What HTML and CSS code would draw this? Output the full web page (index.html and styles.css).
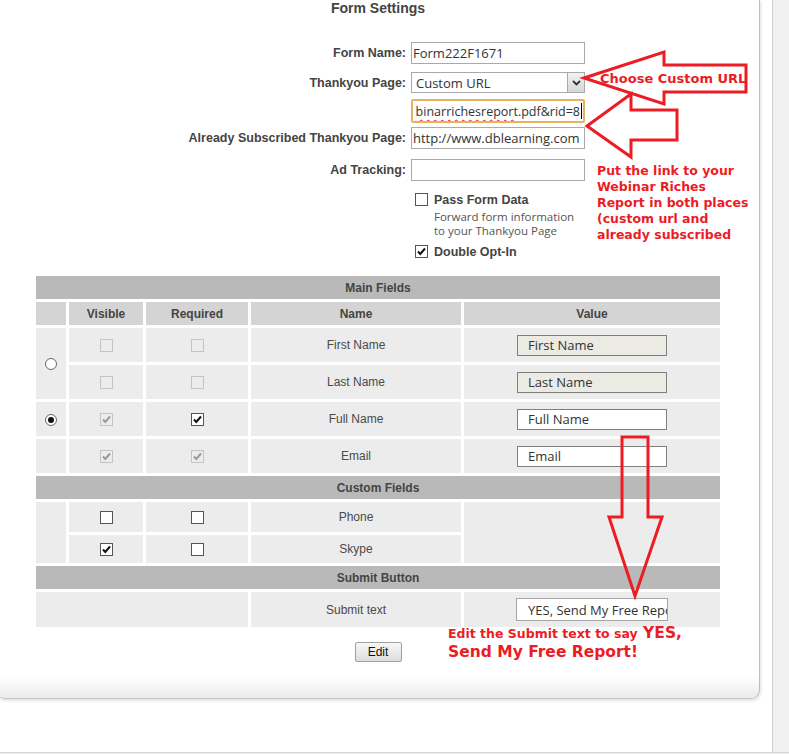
FILE: index.html
```html
<!DOCTYPE html>
<html>
<head>
    <title>Form Settings</title>
    <link rel="stylesheet" href="styles.css">
</head>
<body>
    <div class="window">
        <div class="main">
            <div class="panel">
                <h1 class="title">Form Settings</h1>

                <div class="settings">
                    <label>Form Name:</label>
                    <input class="field" type="text" value="Form222F1671">

                    <label>Thankyou Page:</label>
                    <div class="select">
                        <span class="select-text">Custom URL</span>
                        <span class="select-btn">
                            <svg width="9" height="6" viewBox="0 0 9 6"><polyline points="1,1 4.5,4.5 8,1" fill="none" stroke="#333" stroke-width="1.8"/></svg>
                        </span>
                    </div>

                    <span></span>
                    <div class="field focused">
                        <span><span class="misspelled">binarrichesreport</span>.pdf&amp;rid=8</span><span class="caret"></span>
                    </div>

                    <label>Already Subscribed Thankyou Page:</label>
                    <input class="field" type="text" value="http://www.dblearning.com">

                    <label>Ad Tracking:</label>
                    <input class="field" type="text" value="">
                </div>

                <div class="options">
                    <div class="option">
                        <span class="box"></span>
                        <div>
                            <div class="option-title">Pass Form Data</div>
                            <div class="option-desc">Forward form information<br>to your Thankyou Page</div>
                        </div>
                    </div>
                    <div class="option opt-in">
                        <span class="box"><svg width="11" height="11" viewBox="0 0 11 11"><polyline points="2,5.5 4.3,8 9,2.5" fill="none" stroke="#111" stroke-width="2"/></svg></span>
                        <div class="option-title">Double Opt-In</div>
                    </div>
                </div>

                <table class="fields">
                    <colgroup>
                        <col class="c-pick"><col class="c-vis"><col class="c-req"><col class="c-name"><col class="c-val">
                    </colgroup>
                    <tr class="section"><th colspan="5">Main Fields</th></tr>
                    <tr class="heads"><th></th><th>Visible</th><th>Required</th><th>Name</th><th>Value</th></tr>
                    <tr class="row">
                        <td rowspan="2"><span class="radio"></span></td>
                        <td><span class="box dim"></span></td>
                        <td><span class="box dim"></span></td>
                        <td>First Name</td>
                        <td><input class="value" type="text" value="First Name" disabled></td>
                    </tr>
                    <tr class="row">
                        <td><span class="box dim"></span></td>
                        <td><span class="box dim"></span></td>
                        <td>Last Name</td>
                        <td><input class="value" type="text" value="Last Name" disabled></td>
                    </tr>
                    <tr class="row">
                        <td><span class="radio on"></span></td>
                        <td><span class="box dim"><svg width="11" height="11" viewBox="0 0 11 11"><polyline points="2,5.5 4.3,8 9,2.5" fill="none" stroke="#9a9a9a" stroke-width="2"/></svg></span></td>
                        <td><span class="box"><svg width="11" height="11" viewBox="0 0 11 11"><polyline points="2,5.5 4.3,8 9,2.5" fill="none" stroke="#111" stroke-width="2"/></svg></span></td>
                        <td>Full Name</td>
                        <td><input class="value" type="text" value="Full Name"></td>
                    </tr>
                    <tr class="row">
                        <td></td>
                        <td><span class="box dim"><svg width="11" height="11" viewBox="0 0 11 11"><polyline points="2,5.5 4.3,8 9,2.5" fill="none" stroke="#9a9a9a" stroke-width="2"/></svg></span></td>
                        <td><span class="box dim"><svg width="11" height="11" viewBox="0 0 11 11"><polyline points="2,5.5 4.3,8 9,2.5" fill="none" stroke="#9a9a9a" stroke-width="2"/></svg></span></td>
                        <td>Email</td>
                        <td><input class="value" type="text" value="Email"></td>
                    </tr>
                    <tr class="section"><th colspan="5">Custom Fields</th></tr>
                    <tr class="phone">
                        <td rowspan="2"></td>
                        <td><span class="box"></span></td>
                        <td><span class="box"></span></td>
                        <td>Phone</td>
                        <td rowspan="2"></td>
                    </tr>
                    <tr class="skype">
                        <td><span class="box"><svg width="11" height="11" viewBox="0 0 11 11"><polyline points="2,5.5 4.3,8 9,2.5" fill="none" stroke="#111" stroke-width="2"/></svg></span></td>
                        <td><span class="box"></span></td>
                        <td>Skype</td>
                    </tr>
                    <tr class="section"><th colspan="5">Submit Button</th></tr>
                    <tr class="submit">
                        <td colspan="3"></td>
                        <td>Submit text</td>
                        <td><input class="value light" type="text" value="YES, Send My Free Report!"></td>
                    </tr>
                </table>

                <div class="actions">
                    <button class="edit-btn">Edit</button>
                </div>
            </div>
        </div>
        <div class="track"></div>
    </div>

    <!-- red annotations drawn on top of the screenshot -->
    <svg class="arrows" width="789" height="754" viewBox="0 0 789 754">
        <path d="M584 78 L664 52 L664 65 L746 65 L746 92 L664 92 L664 104 Z"/>
        <path d="M587 126 L631 94 L631 110 L677 110 L677 140 L631 140 L631 157 Z"/>
        <path d="M622 437 L648 437 L648 517 L662 517 L635 596 L609 517 L622 517 Z"/>
    </svg>
    <div class="note note-choose">Choose Custom URL</div>
    <div class="note note-link">Put the link to your<br>Webinar Riches<br>Report in both places<br>(custom url and<br>already subscribed</div>
    <div class="note note-submit"><span class="small">Edit the Submit text to say</span> YES,<br>Send My Free Report!</div>
</body>
</html>
```

FILE: styles.css
```css
body {
    margin: 0;
    background: #f0f0f0;
    font-family: "Liberation Sans", Arial, sans-serif;
    color: #444;
}

.window {
    display: flex;
    height: 752px;
    background: #fff;
    border-bottom: 1px solid #d6d6d6;
}

.main {
    width: 772px;
}

.track {
    flex: 1;
    border-left: 1px solid #d0d0d0;
    background: #f0f0f0;
}

.panel {
    box-sizing: border-box;
    width: 764px;
    height: 699px;
    margin-left: -4px;
    padding: 0 3px 0 4px;
    border-right: 1px solid #bdbdbd;
    border-bottom: 1px solid #c6c6c6;
    border-radius: 0 0 9px 9px;
    background: linear-gradient(to bottom, #fff calc(100% - 22px), #ebebeb);
    box-shadow: 1px 2px 3px rgba(0, 0, 0, 0.12);
}

.title {
    margin: 0;
    font-size: 14px;
    line-height: 16px;
    text-align: center;
    color: #444;
}

/* top settings block */
.settings {
    display: grid;
    grid-template-columns: 406px 174px;
    grid-template-rows: 30px 27px 28px 32px 22px;
    column-gap: 5px;
    margin-top: 26px;
}

.settings label {
    text-align: right;
    font-weight: bold;
    font-size: 12.5px;
    line-height: 22px;
}

.field {
    box-sizing: border-box;
    width: 174px;
    height: 22px;
    margin: 0;
    padding: 0 1px;
    border: 1px solid #a9a9a9;
    background: #fff;
    font-family: "Open Sans", sans-serif;
    font-size: 13px;
    color: #333;
    outline: none;
}

.field.focused {
    display: flex;
    align-items: center;
    justify-content: flex-end;
    height: 24px;
    padding: 0 1px 0 0;
    border: 2px solid #e9b062;
    border-radius: 2px;
    overflow: hidden;
    white-space: nowrap;
    font-size: 12.5px;
}

.misspelled {
    text-decoration: underline wavy #e02020;
    text-decoration-thickness: 1px;
    text-underline-offset: 3px;
}

.caret {
    flex: none;
    width: 1px;
    height: 16px;
    margin-left: 1px;
    background: #000;
}

.select {
    box-sizing: border-box;
    display: flex;
    align-items: center;
    width: 174px;
    height: 21px;
    border: 1px solid #a9a9a9;
    background: #fff;
}

.select-text {
    flex: 1;
    padding-left: 4px;
    font-family: "Open Sans", sans-serif;
    font-size: 13px;
    color: #333;
}

.select-btn {
    box-sizing: border-box;
    display: flex;
    align-items: center;
    justify-content: center;
    width: 17px;
    height: 19px;
    border-left: 1px solid #a9a9a9;
    background: linear-gradient(#f2f2f2, #d6d6d6);
}

.options {
    margin: 12px 0 0 415px;
}

.option {
    display: flex;
    gap: 6px;
    align-items: flex-start;
}

.opt-in {
    margin-top: 7px;
}

.option-title {
    font-weight: bold;
    font-size: 12.5px;
    line-height: 14px;
}

.option-desc {
    margin-top: 3px;
    font-family: "Open Sans", sans-serif;
    font-size: 11.5px;
    line-height: 14px;
    color: #555;
}

/* checkboxes and radios */
.box {
    box-sizing: border-box;
    display: inline-flex;
    align-items: center;
    justify-content: center;
    flex: none;
    width: 13px;
    height: 13px;
    border: 1px solid #555;
    background: #fff;
    vertical-align: middle;
}

.box.dim {
    border-color: #c4c4c4;
    background: #ececec;
}

.radio {
    box-sizing: border-box;
    display: inline-flex;
    align-items: center;
    justify-content: center;
    width: 12px;
    height: 12px;
    border: 1px solid #666;
    border-radius: 50%;
    background: #fff;
    vertical-align: middle;
}

.radio.on::after {
    content: "";
    width: 6px;
    height: 6px;
    border-radius: 50%;
    background: #111;
}

/* fields table */
.fields {
    width: 690px;
    margin: 14px 0 0 33px;
    table-layout: fixed;
    border-collapse: separate;
    border-spacing: 3px;
}

.c-pick { width: 30px; }
.c-vis { width: 74px; }
.c-req { width: 102px; }
.c-name { width: 210px; }
.c-val { width: 256px; }

.fields th,
.fields td {
    padding: 0;
    text-align: center;
    font-size: 12px;
}

.fields th {
    font-weight: bold;
    color: #444;
}

.fields td {
    background: #ececec;
    color: #4a4a4a;
}

.section th {
    height: 23px;
    background: #b9b9b9;
}

.heads th {
    height: 23px;
    background: #d4d4d4;
}

.row td { height: 34px; }
.phone td { height: 30px; }
.skype td { height: 28px; }
.submit td { height: 35px; }

.value {
    box-sizing: border-box;
    width: 150px;
    height: 21px;
    margin: 0;
    padding: 0 0 0 10px;
    border: 1px solid #7f7f7f;
    background: #fff;
    font-family: "Open Sans", sans-serif;
    font-size: 13px;
    color: #333;
    vertical-align: middle;
}

.value:disabled {
    background: #ebeae3;
    color: #333;
}

.value.light {
    width: 152px;
    height: 23px;
    padding-left: 11px;
    border-color: #a5a5a5;
}

.actions {
    margin-top: 12px;
    text-align: center;
}

.edit-btn {
    width: 47px;
    height: 20px;
    padding: 0;
    border: 1px solid #a0a0a0;
    border-radius: 2px;
    background: linear-gradient(#f7f7f7, #dddddd);
    font-family: "Liberation Sans", Arial, sans-serif;
    font-size: 12px;
    color: #111;
}

/* annotations */
.arrows {
    position: absolute;
    top: 0;
    left: 0;
    pointer-events: none;
}

.arrows path {
    fill: none;
    stroke: #ed1c24;
    stroke-width: 3;
}

.note {
    position: absolute;
    font-family: "DejaVu Sans", sans-serif;
    font-weight: bold;
    color: #ed1c24;
    white-space: nowrap;
}

.note-choose {
    top: 71px;
    left: 600px;
    font-size: 13px;
    line-height: 15px;
}

.note-link {
    top: 163px;
    left: 597px;
    font-size: 12.5px;
    line-height: 16px;
}

.note-submit {
    top: 624px;
    left: 448px;
    font-size: 15.5px;
    line-height: 18px;
}

.note-submit .small {
    font-size: 12.5px;
}
```
